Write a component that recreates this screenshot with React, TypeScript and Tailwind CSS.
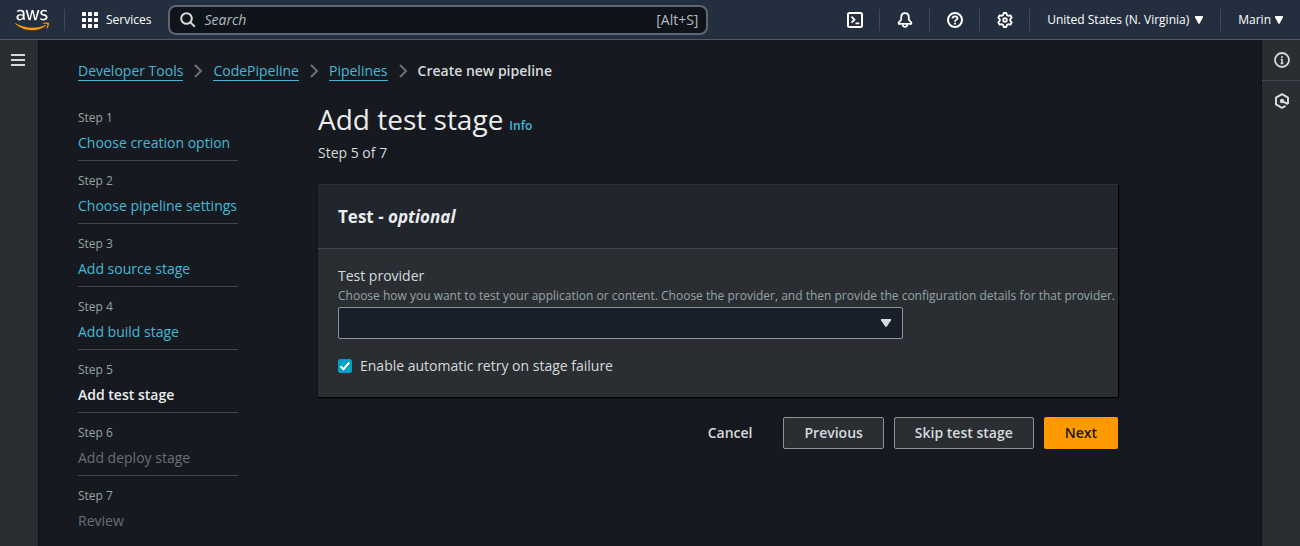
import React from "react";
import { FaAws } from "react-icons/fa";

const steps = [
  { label: "Choose creation option", state: "link" },
  { label: "Choose pipeline settings", state: "link" },
  { label: "Add source stage", state: "link" },
  { label: "Add build stage", state: "link" },
  { label: "Add test stage", state: "current" },
  { label: "Add deploy stage", state: "upcoming" },
  { label: "Review", state: "upcoming" },
];

const crumbs = ["Developer Tools", "CodePipeline", "Pipelines"];

function Caret({ className = "w-2.5" }: { className?: string }) {
  return (
    <svg viewBox="0 0 10 8" preserveAspectRatio="none" className={`h-2 fill-current ${className}`} aria-hidden="true">
      <path d="M0 0h10v1.2L5.700 7.800H4.300L0 1.2z" />
    </svg>
  );
}

function Icon({ children, className = "" }: { children: React.ReactNode; className?: string }) {
  return (
    <svg
      viewBox="0 0 16 16"
      className={`size-4 ${className}`}
      fill="none"
      stroke="currentColor"
      strokeWidth="2"
      aria-hidden="true"
    >
      {children}
    </svg>
  );
}

function AwsLogo() {
  return (
    <>
      <svg className="absolute size-0" aria-hidden="true">
        <defs>
          <linearGradient id="aws-fill" gradientUnits="userSpaceOnUse" x1="0" y1="0" x2="0" y2="512">
            <stop offset="0.58" stopColor="#ffffff" />
            <stop offset="0.58" stopColor="#ff9900" />
          </linearGradient>
        </defs>
      </svg>
      <FaAws fill="url(#aws-fill)" className="h-7 w-8.5" />
    </>
  );
}

function HeaderButton({ label, children }: { label: string; children: React.ReactNode }) {
  return (
    <div className="flex h-[22px] w-[50px] items-center justify-center border-r border-[#3f4b5b]">
      <button type="button" aria-label={label} className="flex text-white">
        {children}
      </button>
    </div>
  );
}

function Header() {
  return (
    <header className="flex h-10 items-center border-b border-[#545b64] bg-[#232f3e] text-xs text-white">
      <a href="#home" aria-label="AWS" className="flex h-[22px] w-[65px] items-center justify-center border-r border-[#3f4b5b]">
        <AwsLogo />
      </a>
      <button type="button" className="flex items-center gap-2 px-[17px] font-medium">
        <svg viewBox="0 0 16 16" className="size-4 fill-current" aria-hidden="true">
          {[0, 6, 12].map((y) => [0, 6, 12].map((x) => <rect key={`${x}-${y}`} x={x} y={y} width="4" height="4" rx="0.6" />))}
        </svg>
        Services
      </button>
      <label className="flex h-[30px] max-w-[540px] flex-1 items-center gap-1.5 rounded-lg border-2 border-[#5f6672] bg-[#0f141a] px-2 text-sm text-[#b4bac3] focus-within:border-[#44b9d6]">
        <Icon className="mx-0.5 shrink-0 text-[#d5dbdb]">
          <circle cx="6.5" cy="6.5" r="5.3" />
          <path d="M10.4 10.4l4.4 4.4" />
        </Icon>
        <input
          type="search"
          aria-label="Search"
          placeholder="Search"
          className="min-w-0 flex-1 bg-transparent text-sm outline-none placeholder:text-[#b4bac3] placeholder:italic"
        />
        <span className="text-sm">[Alt+S]</span>
      </label>
      <nav className="ml-auto flex items-center">
        <HeaderButton label="CloudShell">
          <Icon>
            <rect x="1" y="1" width="14" height="14" rx="1.5" />
            <path d="M4.500 4.700L7.500 7.700l-3 3M8.500 11.300h3.800" strokeWidth="1.8" />
          </Icon>
        </HeaderButton>
        <HeaderButton label="Notifications">
          <Icon>
            <path
              d="M8 1.200C5.500 1.200 4.200 3 4.200 5.200v2.400L1.700 10.600v1.200h12.600v-1.200L11.800 7.600V5.200C11.800 3 10.500 1.200 8 1.200z"
              strokeWidth="1.8"
              strokeLinejoin="round"
            />
            <path d="M5.700 12.500c.2 1.700 1.100 2.400 2.300 2.400s2.100-.7 2.300-2.400" strokeWidth="1.8" />
          </Icon>
        </HeaderButton>
        <HeaderButton label="Help">
          <Icon>
            <circle cx="8" cy="8" r="7" />
            <path d="M5.500 6.500C5.500 5 6.600 4.300 8 4.300s2.500.8 2.500 2c0 1.600-2.500 1.500-2.500 3.400" strokeWidth="1.800" />
            <path d="M8 10.800v1.800" strokeWidth="1.900" />
          </Icon>
        </HeaderButton>
        <HeaderButton label="Settings">
          <Icon>
            <path
              d="M6.700 1h2.600l.7 2.100 1.200.7 2.200-.5 1.300 2.300L13.200 7.300v1.400l1.500 1.700-1.300 2.300-2.200-.5-1.200.7-.7 2.100H6.700L6 12.900l-1.200-.7-2.200.5-1.300-2.300 1.500-1.700V7.300L1.300 5.600l1.300-2.300 2.200.5L6 3.100z"
              strokeWidth="1.800"
              strokeLinejoin="round"
            />
            <circle cx="8" cy="8" r="1.800" strokeWidth="1.800" />
          </Icon>
        </HeaderButton>
        <div className="flex h-[22px] items-center border-r border-[#3f4b5b] px-[17px]">
          <button type="button" className="flex items-center gap-1.5 font-medium">
            United States (N. Virginia)
            <Caret className="w-2" />
          </button>
        </div>
        <button type="button" className="flex items-center gap-1 px-[17px] font-medium">
          Marin
          <Caret className="w-2" />
        </button>
      </nav>
    </header>
  );
}

function Breadcrumbs() {
  return (
    <nav aria-label="Breadcrumbs" className="text-sm leading-5">
      <ol className="flex items-center">
        {crumbs.map((crumb) => (
          <li key={crumb} className="flex items-center">
            <a href={`#${crumb}`} className="border-b border-[#44b9d6] leading-[18px] text-[#44b9d6]">
              {crumb}
            </a>
            <Icon className="mx-[7px] text-[#687078]">
              <path d="M5 2l6 6-6 6" />
            </Icon>
          </li>
        ))}
        <li className="font-semibold text-[#d5dbdb]">Create new pipeline</li>
      </ol>
    </nav>
  );
}

function StepList() {
  return (
    <aside className="w-40 shrink-0">
      <ol>
        {steps.map((step, i) => (
          <li key={step.label} className="border-b border-[#414750] pt-2.5 pb-[7px] last:border-b-0">
            <p className="text-xs leading-5 text-[#95a5a6]">Step {i + 1}</p>
            <p className="pt-[5px] text-sm leading-5 whitespace-nowrap">
              {step.state === "link" && (
                <a href={`#step-${i + 1}`} className="text-[#44b9d6]">
                  {step.label}
                </a>
              )}
              {step.state === "current" && <span className="font-semibold text-[#eaeded]">{step.label}</span>}
              {step.state === "upcoming" && <span className="text-[#687078]">{step.label}</span>}
            </p>
          </li>
        ))}
      </ol>
    </aside>
  );
}

function TestForm() {
  return (
    <form className="max-w-[800px] flex-1" onSubmit={(e) => e.preventDefault()}>
      <div className="flex items-baseline gap-1.5 pt-[3px]">
        <h1 className="text-[28px] leading-9 text-[#eaeded]">Add test stage</h1>
        <a href="#info" className="text-xs font-semibold text-[#44b9d6]">
          Info
        </a>
      </div>
      <p className="mt-1.5 text-sm leading-5 text-[#d5dbdb]">Step 5 of 7</p>

      <section className="mt-[21px] border-t border-[#2c3238] bg-[#2a2e33] shadow-[0_1px_1px_0_#000000,1px_1px_1px_0_#000000]">
        <h2 className="border-b border-[#414750] bg-[#21252c] px-5 py-5 text-[17px] leading-[23px] font-bold text-[#eaeded]">
          Test <em>- optional</em>
        </h2>
        <div className="px-5 pt-[17px] pb-[21px]">
          <label htmlFor="provider" className="block text-sm leading-5 font-medium text-[#d5dbdb]">
            Test provider
          </label>
          <p id="provider-hint" className="-mr-5 mt-0.5 text-xs leading-4 text-[#95a5a6]">
            Choose how you want to test your application or content. Choose the provider, and then provide the
            configuration details for that provider.
          </p>
          <div className="relative mt-[3px] max-w-[565px]">
            <select
              id="provider"
              aria-describedby="provider-hint"
              defaultValue=""
              className="block h-8 w-full appearance-none rounded-xs border border-[#879596] bg-[#1a2029] px-2.5 text-sm text-[#d5dbdb]"
            >
              <option value=""></option>
            </select>
            <Caret className="pointer-events-none absolute top-3 right-3 w-2.5 text-[#d5dbdb]" />
          </div>
          <div className="mt-[17px] flex items-center gap-2">
            <span className="relative flex size-3.5">
              <input
                id="retry"
                type="checkbox"
                defaultChecked
                className="peer size-3.5 appearance-none rounded-xs border border-[#879596] checked:border-[#00a1c9] checked:bg-[#00a1c9]"
              />
              <svg
                viewBox="0 0 14 14"
                className="pointer-events-none invisible absolute inset-0 size-3.5 peer-checked:visible"
                fill="none"
                stroke="#ffffff"
                strokeWidth="2"
                aria-hidden="true"
              >
                <path d="M2.500 7.200l3 3 5.700-6.700" />
              </svg>
            </span>
            <label htmlFor="retry" className="text-sm leading-5 font-medium text-[#d5dbdb]">
              Enable automatic retry on stage failure
            </label>
          </div>
        </div>
      </section>

      <div className="mt-5 flex justify-end gap-2.5 text-sm font-semibold text-[#d5dbdb]">
        <button type="button" className="h-8 px-[21px]">
          Cancel
        </button>
        <button type="button" className="h-8 rounded-xs border border-[#879596] bg-[#2a2e33] px-5">
          Previous
        </button>
        <button type="button" className="h-8 rounded-xs border border-[#879596] bg-[#2a2e33] px-5">
          Skip test stage
        </button>
        <button type="submit" className="h-8 rounded-xs bg-[#ff9900] px-[21px] text-[#16191f]">
          Next
        </button>
      </div>
    </form>
  );
}

export default function App() {
  return (
    <div className="flex min-h-screen flex-col bg-[#16191f] font-['Open_Sans',sans-serif]">
      <Header />
      <div className="flex flex-1">
        <div className="w-[38px] shrink-0 bg-[#2a2e33] text-[#d5dbdb] shadow-[1px_0_0_0_#0f1115]">
          <button type="button" aria-label="Open navigation" className="flex h-10 w-9 items-center justify-center">
            <Icon>
              <path d="M1 3h14M1 8h14M1 13h14" />
            </Icon>
          </button>
        </div>
        <main className="min-w-0 flex-1 px-10 pt-[21px]">
          <Breadcrumbs />
          <div className="mt-[17px] flex gap-20">
            <StepList />
            <TestForm />
          </div>
        </main>
        <div className="w-[38px] shrink-0 bg-[#2a2e33] text-[#d5dbdb] shadow-[-1px_0_0_0_#0f1115]">
          <button
            type="button"
            aria-label="Information"
            className="flex h-[41px] w-full items-center justify-center border-b border-[#414750] pl-0.5"
          >
            <Icon>
              <circle cx="8" cy="8" r="7" strokeWidth="1.800" />
              <path d="M8 4v2M8 7v5M6.600 11.500h2.800M6.800 7.500H8" strokeWidth="1.600" />
            </Icon>
          </button>
          <button type="button" aria-label="Tools" className="flex h-10 w-full items-center justify-center pl-0.5">
            <Icon>
              <path d="M14 11V4.600L8 1.200 2 4.600v6.800l6 3.400 3.500-2" strokeLinejoin="round" />
              <circle cx="8" cy="8" r="2.200" fill="currentColor" stroke="none" />
              <path d="M8 8l6 3.200" />
            </Icon>
          </button>
        </div>
      </div>
    </div>
  );
}
